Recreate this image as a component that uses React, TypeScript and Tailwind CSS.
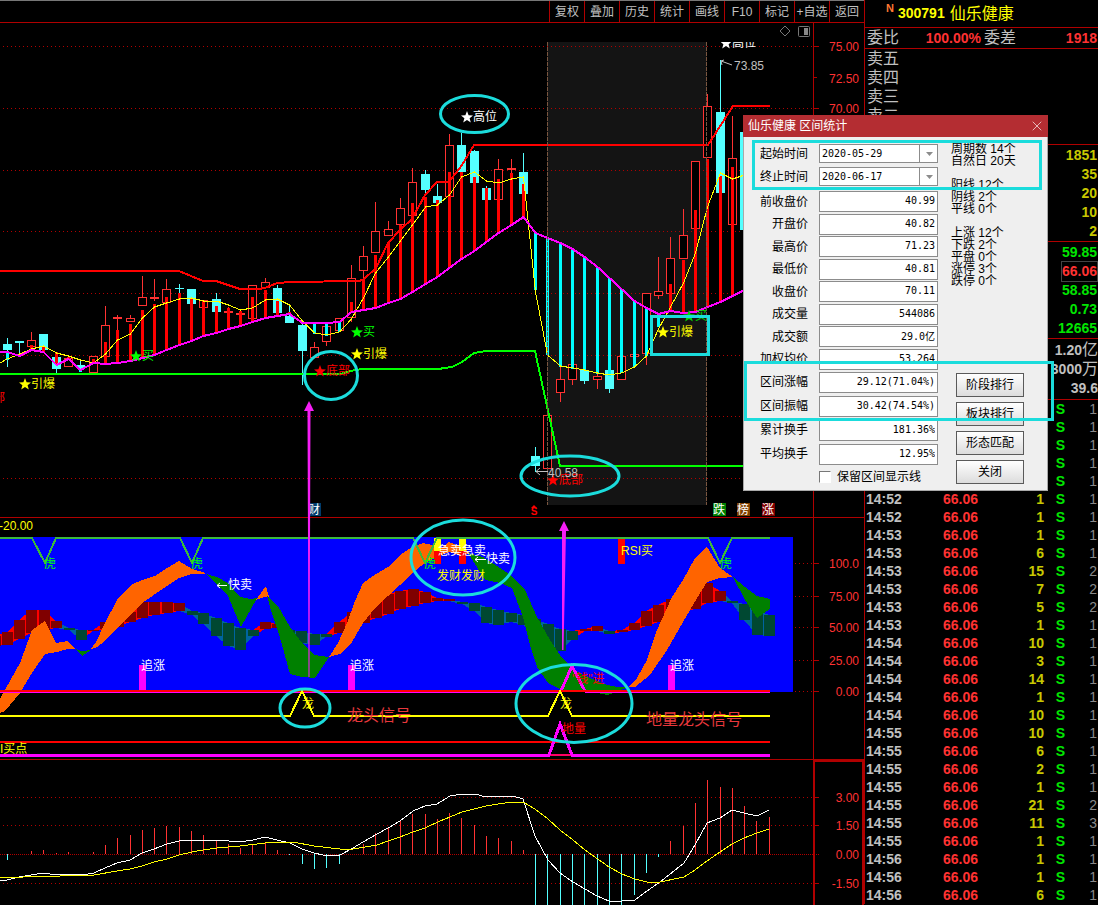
import React from 'react';
import { X } from 'lucide-react';

const GRID = '#b00000';
const RED = '#ff3232';
const CYAN = '#54ffff';
const MARK = '#1bdcdc';

// x of the nth bar
const bx = (i: number) => Math.round(6.6 + 12.293 * i) + 0.5;
const pts = (list: number[][]) => list.map((p) => p.join(',')).join(' ');
const byBar = (ys: number[]) => ys.map((y, i) => `${bx(i)},${y}`).join(' ');

// up, high, low, body top, body bottom
type Candle = [boolean, number, number, number, number];
const U = true;
const D = false;
const candles: Candle[] = [
  [D, 338, 367, 344, 350], [D, 341, 353, 341, 343], [U, 332, 347, 340, 347], [D, 334, 350, 334, 350],
  [D, 352, 373, 357, 369], [U, 356, 367, 358, 367], [D, 359, 372, 365, 368], [U, 356, 373, 356, 373],
  [U, 306, 357, 325, 357], [U, 315, 330, 317, 319], [U, 315, 322, 318, 322], [U, 276, 306, 297, 306],
  [U, 279, 301, 297, 299], [U, 279, 303, 289, 303], [D, 284, 293, 288, 289], [D, 289, 304, 289, 304],
  [U, 300, 308, 300, 308], [D, 293, 312, 299, 312], [U, 307, 313, 311, 313], [U, 310, 315, 313, 315],
  [U, 285, 319, 285, 319], [U, 278, 288, 282, 288], [D, 285, 313, 288, 313], [D, 305, 323, 316, 323],
  [D, 320, 385, 325, 351], [U, 342, 358, 347, 358], [U, 326, 346, 326, 342], [U, 318, 331, 318, 331],
  [U, 265, 322, 278, 318], [U, 246, 280, 256, 271], [U, 202, 253, 231, 253], [U, 221, 236, 229, 236],
  [U, 198, 225, 208, 225], [U, 168, 216, 182, 216], [D, 170, 195, 174, 190], [D, 184, 203, 196, 203],
  [U, 134, 197, 145, 197], [D, 133, 172, 145, 172], [D, 150, 183, 151, 183], [D, 186, 200, 188, 200],
  [U, 159, 200, 169, 200], [U, 159, 173, 168, 170], [D, 153, 194, 172, 194], [D, 447, 472, 456, 466],
  [U, 415, 469, 415, 469], [U, 367, 402, 379, 393], [U, 364, 385, 364, 380], [D, 370, 384, 370, 381],
  [U, 374, 389, 376, 380], [D, 370, 393, 370, 389], [U, 356, 380, 356, 380], [U, 352, 367, 354, 357],
  [U, 293, 365, 293, 354], [U, 257, 299, 291, 296], [U, 237, 294, 258, 294], [U, 209, 259, 235, 259],
  [U, 161, 229, 161, 229], [U, 94, 158, 106, 158], [D, 60, 193, 112, 193], [U, 116, 225, 158, 225],
  [D, 132, 230, 132, 230],
];

const trend = [
  352, 356, 350, 352, 365, 359, 370, 363, 364, 363, 361, 358, 355, 350, 345, 341, 336, 333, 329, 326,
  322, 318, 316, 314, 323, 323, 323, 322, 312, 310, 308, 303, 299, 292, 284, 277, 268, 259, 251, 242,
  233, 225, 217, 233, 238, 243, 249, 257, 267, 278, 289, 301, 308, 314, 311, 313, 312, 307, 302, 296, 290,
];

const fast = [
  359, 354, 349, 346, 353, 356, 360, 363, 354, 340, 334, 318, 307, 303, 299, 298, 301, 301, 305, 310,
  308, 300, 299, 305, 321, 333, 335, 332, 319, 298, 273, 257, 241, 225, 207, 205, 195, 177, 172, 181,
  183, 179, 177, 292, 355, 366, 368, 370, 373, 375, 373, 367, 356, 329, 307, 283, 253, 207, 173, 179, 175,
];

// start of the stripe that hangs between price and trend line
const stripes = [
  360, 357, 345, 347, 352, 357, 372, 359, 342, 330, 324, 310, 304, 297, 293, 299, 301, 306, 308, 311,
  297, 290, 301, 312, 324, 334, 336, 332, 302, 280, 255, 242, 225, 203, 197, 200, 172, 172, 177, 188,
  179, 173, 184, 290, 355, 367, 369, 370, 374, 376, 373, 367, 356, 327, 284, 260, 210, 159, 176, 167, 240,
];

// up, x, y, height
const blocks: [boolean, number, number, number][] = [
  [U, -10, 636, 10], [U, 2, 632, 13], [U, 14, 620, 19], [U, 26, 610, 23], [U, 39, 610, 20], [U, 51, 621, 7],
  [D, 64, 628, 2], [D, 76, 630, 10], [U, 88, 630, 1], [U, 100, 622, 7], [U, 113, 619, 8], [U, 125, 612, 10],
  [U, 137, 602, 16], [U, 149, 602, 13], [U, 162, 602, 11], [U, 174, 603, 8], [D, 187, 611, 4], [D, 198, 613, 11],
  [D, 211, 618, 18], [D, 223, 623, 23], [D, 235, 628, 22], [D, 248, 630, 6], [U, 260, 622, 7], [U, 272, 624, 4],
  [D, 284, 630, 5], [D, 296, 631, 12], [D, 309, 634, 11], [D, 321, 634, 3], [U, 334, 622, 11], [U, 347, 612, 18],
  [U, 359, 606, 17], [U, 371, 598, 20], [U, 383, 594, 20], [U, 395, 591, 18], [U, 408, 589, 17], [U, 420, 592, 11],
  [U, 432, 598, 3], [U, 444, 599, 2], [D, 457, 602, 2], [D, 469, 603, 8], [D, 481, 607, 16], [D, 493, 610, 15],
  [D, 506, 613, 9], [D, 518, 615, 10], [D, 530, 619, 12], [D, 543, 624, 23], [D, 555, 629, 22], [D, 567, 631, 9],
  [U, 580, 629, 2], [U, 592, 626, 5], [D, 604, 631, 3], [U, 617, 630, 2], [U, 629, 623, 7], [U, 641, 611, 15],
  [U, 653, 605, 17], [U, 666, 599, 17], [U, 678, 595, 17], [U, 690, 592, 17], [U, 702, 583, 20], [U, 715, 591, 10],
  [D, 727, 601, 2], [D, 739, 604, 16], [D, 752, 610, 25], [D, 764, 615, 21],
];

const waves: { fill: string; points: string }[] = [
  { fill: '#ff6400', points: '0,699 20,663 32,630 45,621 56,643 68,641 75,649 68,649 57,652 45,654 32,673 20,693 5,711 0,713' },
  { fill: '#008000', points: '75,649 82,651 91,650 82,656' },
  { fill: '#ff6400', points: '91,649 96,642 104,625 117,600 131,585 142,580 155,576 167,568 179,561 192,569 203,572 206,574 192,574 179,578 167,586 142,603 117,628 105,641 97,647' },
  { fill: '#008000', points: '206,574 217,577 228,583 240,597 251,599 257,598 241,627 228,596 217,585' },
  { fill: '#ff6400', points: '256,600 266,586 269,597 264,597' },
  { fill: '#008000', points: '267,595 270,599 278,606 290,627 302,643 314,655 329,657 315,678 302,677 290,674 279,634 270,607' },
  { fill: '#ff6400', points: '329,657 338,643 347,623 355,601 363,583 376,574 388,567 400,555 412,547 423,543 432,545 440,549 449,542 462,547 470,553 462,556 449,552 437,557 425,563 412,573 400,585 375,608 363,623 352,642 340,654' },
  { fill: '#008000', points: '468,553 483,557 500,568 512,576 525,590 537,617 550,640 562,658 572,668 583,675 607,685 617,687 628,687 617,692 607,695 593,692 562,690 548,683 537,667 530,645 523,617 512,588 500,583 485,580 480,572' },
  { fill: '#ff6400', points: '628,687 637,678 647,660 657,630 672,597 683,580 695,558 707,547 720,568 733,577 720,578 707,582 697,598 683,622 667,650 650,675 635,687' },
  { fill: '#008000', points: '733,577 745,587 757,596 770,599 770,609 757,618 745,600' },
];

const macdBars = [
  860, 854, 851, 850, 853, 852, 854, 852, 845, 838, 835, 830, 828, 826, 827, 831, 835, 840, 844, 848,
  845, 843, 850, 855, 864, 869, 868, 864, 854, 844, 833, 827, 821, 814, 814, 819, 813, 818, 825, 836,
  838, 841, 850, 905, 905, 905, 905, 905, 905, 905, 905, 895, 873, 857, 841, 826, 803, 780, 787, 788,
  806, 821, 817,
];

const dif = [
  [0, 881], [7, 880], [19, 877], [31, 875], [44, 873], [56, 875], [68, 874], [82, 875], [94, 873], [105, 868],
  [117, 863], [130, 860], [142, 853], [154, 849], [167, 844], [179, 841], [192, 840], [217, 840], [240, 842],
  [253, 840], [265, 837], [277, 840], [290, 843], [302, 849], [314, 853], [323, 855], [340, 855], [353, 848],
  [363, 842], [377, 834], [388, 828], [400, 821], [413, 811], [425, 806], [437, 804], [450, 796], [462, 794],
  [475, 794], [486, 797], [498, 796], [513, 796], [523, 799], [535, 836], [548, 860], [560, 873], [573, 882],
  [597, 896], [609, 901], [622, 901], [635, 900], [647, 891], [660, 882], [684, 863], [695, 845], [707, 823],
  [720, 818], [732, 810], [744, 813], [757, 816], [769, 810],
];

const dea = [
  [0, 877], [23, 877], [27, 876], [60, 876], [67, 875], [94, 875], [117, 871], [130, 869], [142, 866], [154, 862],
  [167, 859], [179, 855], [192, 852], [203, 850], [217, 848], [240, 846], [265, 843], [277, 842], [293, 842],
  [314, 846], [340, 849], [353, 849], [377, 845], [388, 841], [400, 837], [413, 832], [425, 828], [440, 821],
  [450, 817], [462, 812], [486, 806], [511, 802], [523, 802], [535, 809], [548, 819], [560, 830], [573, 840],
  [585, 850], [609, 867], [622, 874], [635, 879], [647, 882], [660, 882], [684, 877], [695, 870], [707, 861],
  [720, 852], [732, 844], [744, 838], [757, 833], [769, 829],
];

const upper = '0,271 179,271 203,281 216,281 240,289 258,289 265,288 277,283 291,282 358,281 363,280 376,268 388,243 400,230 412,219 425,195 437,182 449,182 462,165 474,145 708,145 733,106 770,106';
const lower = '0,374 340,374 355,370 363,369 438,369 452,367 462,362 474,353 486,351 535,351 560,466 770,466';

const toolbar = ['复权', '叠加', '历史', '统计', '画线', 'F10', '标记', '+自选', '返回'];

const bids = ['1851', '35', '20', '10', '2'];
const quotes = ['59.85', '66.06', '58.85', '0.73', '12665'];
const totals = [['1.20', '亿'], ['3000', '万'], ['39.6', '']];

const trades: [string, string, string, string][] = [
  ['', '', '', '1'], ['', '', '', '1'], ['', '', '', '1'], ['', '', '', '1'], ['', '', '', '1'],
  ['14:52', '66.06', '1', '1'], ['14:52', '66.06', '1', '1'], ['14:53', '66.06', '1', '1'],
  ['14:53', '66.06', '6', '1'], ['14:53', '66.06', '15', '2'], ['14:53', '66.06', '7', '2'],
  ['14:53', '66.06', '5', '2'], ['14:53', '66.06', '1', '1'], ['14:54', '66.06', '10', '1'],
  ['14:54', '66.06', '3', '1'], ['14:54', '66.06', '14', '1'], ['14:54', '66.06', '1', '1'],
  ['14:54', '66.06', '10', '1'], ['14:55', '66.06', '10', '1'], ['14:55', '66.06', '6', '1'],
  ['14:55', '66.06', '2', '1'], ['14:55', '66.06', '1', '1'], ['14:55', '66.06', '21', '2'],
  ['14:55', '66.06', '11', '3'], ['14:55', '66.06', '1', '1'], ['14:56', '66.06', '1', '1'],
  ['14:56', '66.06', '1', '1'], ['14:56', '66.06', '6', '1'],
];

const priceFields = [
  ['前收盘价', '40.99'], ['开盘价', '40.82'], ['最高价', '71.23'], ['最低价', '40.81'],
  ['收盘价', '70.11'], ['成交量', '544086'], ['成交额', '29.0亿'], ['加权均价', '53.264'],
];
const rangeFields = [
  ['区间涨幅', '29.12(71.04%)'], ['区间振幅', '30.42(74.54%)'],
  ['累计换手', '181.36%'], ['平均换手', '12.95%'],
];

function Label({ x, y, color, size = 12, children }: { x: number; y: number; color: string; size?: number; children: React.ReactNode }) {
  return (
    <text x={x} y={y} fill={color} fontSize={size} dominantBaseline="central">
      {children}
    </text>
  );
}

// five-pointed star followed by its caption
function StarLabel({ x, y, color, children }: { x: number; y: number; color: string; children: string }) {
  return (
    <g>
      <path
        d="M6 0 L7.6 4.3 L12 4.4 L8.6 7.2 L9.8 11.6 L6 9 L2.2 11.6 L3.4 7.2 L0 4.4 L4.4 4.3 Z"
        transform={`translate(${x} ${y - 6})`}
        fill={color}
      />
      <Label x={x + 12} y={y} color={color}>{children}</Label>
    </g>
  );
}

function Grid({ ys }: { ys: number[] }) {
  return (
    <g stroke={GRID} shapeRendering="crispEdges">
      {ys.map((y) => (
        <g key={y}>
          <line x1={3} x2={814} y1={y + 0.5} y2={y + 0.5} strokeDasharray="1 3" />
          <line x1={814} x2={819} y1={y + 0.5} y2={y + 0.5} />
        </g>
      ))}
    </g>
  );
}

function AxisText({ items }: { items: [number, string][] }) {
  return (
    <g fill={RED} fontSize={12} textAnchor="end">
      {items.map(([y, t]) => (
        <text key={y} x={859} y={y} dominantBaseline="central">{t}</text>
      ))}
    </g>
  );
}

function Badge({ x, fill, children }: { x: number; fill: string; children: string }) {
  return (
    <g>
      <rect x={x} y={503} width={13} height={13} fill={fill} />
      <Label x={x} y={510} color="#fff">{children}</Label>
    </g>
  );
}

function PriceChart() {
  return (
    <svg viewBox="0 23 864 495" className="block w-full" role="img" aria-label="K线">
      <rect x={547} y={42} width={160} height={463} fill="#141414" />
      <Grid ys={[46, 108, 170, 231, 293, 355, 416, 478]} />
      <line x1={814} x2={817} y1={77.5} y2={77.5} stroke={GRID} />
      <g shapeRendering="crispEdges">
        {candles.map(([up, high, low, top, bottom], i) => {
          const x = bx(i);
          const color = up ? RED : CYAN;
          return (
            <g key={i} stroke={color}>
              <line x1={x} x2={x} y1={high} y2={top} />
              <line x1={x} x2={x} y1={bottom} y2={low} />
              {up && bottom - top > 2 ? (
                <rect x={x - 4} y={top + 0.5} width={8} height={bottom - top - 1} fill="#000" />
              ) : (
                <rect x={x - 4.5} y={top} width={9} height={bottom - top} fill={color} stroke="none" />
              )}
            </g>
          );
        })}
        {stripes.map((y, i) => (
          <rect
            key={i}
            x={bx(i) - 1.5}
            width={3}
            y={Math.min(y, trend[i])}
            height={Math.abs(trend[i] - y)}
            fill={y < trend[i] ? '#ff0000' : '#00ffff'}
          />
        ))}
        <polyline points={byBar(fast)} fill="none" stroke="#ffff00" />
        <line x1={0} y1={363} x2={7} y2={359} stroke="#ffff00" />
        <polyline points={`0,352 ${byBar(trend)}`} fill="none" stroke="#ff00ff" strokeWidth={2} />
        <polyline points={upper} fill="none" stroke="#ff0000" strokeWidth={2} />
        <polyline points={lower} fill="none" stroke="#00ff00" strokeWidth={2} />
        <g stroke="#7a5640" strokeDasharray="4 1">
          <line x1={547.5} x2={547.5} y1={42} y2={505} />
          <line x1={706.5} x2={706.5} y1={42} y2={505} />
        </g>
        <line x1={813.5} x2={813.5} y1={23} y2={518} stroke={GRID} />
        <line x1={0} x2={864} y1={517.5} y2={517.5} stroke={GRID} />
      </g>

      <path d="M785 26 L790 31 L785 36 L780 31 Z" fill="none" stroke="#777" />
      <rect x={798.5} y={26.5} width={11} height={10} rx={1} fill="none" stroke="#777" />
      <rect x={804} y={28} width={4} height={7} fill="#888" />

      <StarLabel x={130} y={356} color="#00ff00">买</StarLabel>
      <StarLabel x={19} y={384} color="#ffff00">引爆</StarLabel>
      <Label x={-7} y={398} color="#ff0000">部</Label>
      <StarLabel x={351} y={332} color="#00ff00">买</StarLabel>
      <StarLabel x={351} y={354} color="#ffff00">引爆</StarLabel>
      <StarLabel x={314} y={371} color="#ff0000">底部</StarLabel>
      <StarLabel x={461} y={117} color="#ffffff">高位</StarLabel>
      <StarLabel x={657} y={332} color="#ffff00">引爆</StarLabel>
      <StarLabel x={683} y={316} color="#00dc00">买</StarLabel>
      <StarLabel x={547} y={480} color="#ff0000">底部</StarLabel>
      <svg x={700} y={42} width={80} height={20} viewBox="700 42 80 20">
        <StarLabel x={720} y={43} color="#ffffff">高位</StarLabel>
      </svg>
      <path d="M732 65 L721 61 M724 60 L721 61 L722 65" fill="none" stroke="#c0c0c0" />
      <Label x={734} y={66} color="#c0c0c0">73.85</Label>
      <path d="M548 471.5 L536 471.5 M540 468 L536 471.5 L540 475" fill="none" stroke="#c0c0c0" />
      <Label x={548} y={473} color="#c0c0c0">40.58</Label>

      <Badge x={308} fill="#003c6c">财</Badge>
      <Badge x={713} fill="#008000">跌</Badge>
      <Badge x={737} fill="#804000">榜</Badge>
      <Badge x={762} fill="#800000">涨</Badge>
      <path d="M531 508 L534 505 L537 508 Z" fill="#ff0000" />
      <text x={534} y={515} fill="#ff0000" fontSize={10} fontWeight="bold" textAnchor="middle">S</text>

      <AxisText items={[[47, '75.00'], [79, '72.50'], [109, '70.00']]} />
    </svg>
  );
}

function SignalChart() {
  return (
    <svg viewBox="0 518 864 242" className="block w-full" role="img" aria-label="买卖信号">
      <Grid ys={[563, 596, 627, 660, 691]} />
      <rect x={0} y={537} width={793} height={155} fill="#0000ff" />
      <g shapeRendering="crispEdges">
        {blocks.slice(1).map(([up, x, y, h], i) => {
          const [, px, py, ph] = blocks[i];
          return (
            <polygon
              key={x}
              points={pts([[px + 5, py], [x + 5, y], [x + 5, y + h], [px + 5, py + ph]])}
              fill={up ? '#ff0000' : '#0064a0'}
            />
          );
        })}
        {blocks.map(([up, x, y, h]) => (
          <rect key={x} x={x} y={y} width={11} height={h} fill={up ? '#800000' : '#004832'} />
        ))}
        {waves.map((w) => (
          <polygon key={w.points} points={w.points} fill={w.fill} />
        ))}

        <g fill="#ff00ff">
          <rect x={139} y={665} width={7} height={27} />
          <rect x={348} y={665} width={7} height={27} />
          <rect x={668} y={665} width={7} height={27} />
        </g>
        <rect x={434} y={538} width={7} height={13} fill="#ffff00" />
        <rect x={434} y={551} width={7} height={13} fill="#ff0000" />
        <rect x={459} y={538} width={7} height={13} fill="#ffff00" />
        <rect x={459} y={551} width={7} height={13} fill="#ff0000" />
        <rect x={618} y={539} width={7} height={25} fill="#ff0000" />

        <polyline
          points="0,538 32,538 45,563 56,538 180,538 192,563 203,538 413,538 425,563 437,538 708,538 720,563 732,538 770,538"
          fill="none"
          stroke="#3cb83c"
          strokeWidth={2}
        />
        <polyline points="0,692 561,692" fill="none" stroke="#ff00ff" strokeWidth={2} />
        <polyline points="585,692 770,692" fill="none" stroke="#ff00ff" strokeWidth={2} />
        <polyline points="561,691 572,666 585,691" fill="none" stroke="#ff00ff" strokeWidth={3} />
        <rect x={0} y={690} width={770} height={2} fill="#ff0000" />
        <polyline points="0,716 290,716 302,691 314,716 548,716 560,691 572,716 770,716" fill="none" stroke="#ffff00" strokeWidth={2} />
        <rect x={0} y={741} width={770} height={2} fill="#ff0000" />
        <rect x={549} y={754} width={23} height={2} fill="#ff0064" />
        <polyline points="0,755 549,755 560,724 572,755 770,755" fill="none" stroke="#ff00ff" strokeWidth={3} />
        <line x1={813.5} x2={813.5} y1={518} y2={760} stroke={GRID} />
        <line x1={0} x2={864} y1={759.5} y2={759.5} stroke={GRID} />
      </g>

      <Label x={-1} y={526} color="#ffff00">-20.00</Label>
      <Label x={44} y={564} color="#00ff00">虎</Label>
      <Label x={191} y={564} color="#00ff00">虎</Label>
      <Label x={424} y={564} color="#00ff00">虎</Label>
      <Label x={720} y={564} color="#00ff00">虎</Label>
      <path d="M227 585.5 L217 585.5 M220 583 L217 585.5 L220 588" fill="none" stroke="#fff" />
      <Label x={228} y={585} color="#fff">快卖</Label>
      <path d="M486 559.5 L475 559.5 M478 557 L475 559.5 L478 562" fill="none" stroke="#fff" />
      <Label x={486} y={559} color="#fff">快卖</Label>
      <Label x={438} y={551} color="#fff">急卖</Label>
      <Label x={462} y={551} color="#fff">急卖</Label>
      <Label x={437} y={576} color="#ffff00">发财发财</Label>
      <Label x={621} y={551} color="#ffff00">RSI买</Label>
      <Label x={141} y={666} color="#fff">追涨</Label>
      <Label x={350} y={666} color="#fff">追涨</Label>
      <Label x={670} y={666} color="#fff">追涨</Label>
      <Label x={302} y={704} color="#ffff00">龙</Label>
      <Label x={560} y={704} color="#ffff00">龙</Label>
      <Label x={572} y={679} color="#ff0000">"钱"进</Label>
      <Label x={562} y={729} color="#ff0000">地量</Label>
      <Label x={0} y={749} color="#ffff00">I买点</Label>
      <Label x={347} y={715} color="#e8383c" size={16}>龙头信号</Label>
      <Label x={646} y={719} color="#e8383c" size={16}>地量龙头信号</Label>

      <AxisText items={[[564, '100.0'], [597, '75.00'], [628, '50.00'], [661, '25.00'], [692, '0.00']]} />
    </svg>
  );
}

function MacdChart() {
  return (
    <svg viewBox="0 760 864 145" className="block w-full" role="img" aria-label="MACD">
      <Grid ys={[797, 825, 883]} />
      <g shapeRendering="crispEdges" fill="none">
        <line x1={0} x2={819} y1={854.5} y2={854.5} stroke={GRID} strokeDasharray="1 1" />
        {macdBars.map((y, i) => (
          <line key={i} x1={bx(i)} x2={bx(i)} y1={854} y2={y} stroke={y > 854 ? CYAN : RED} />
        ))}
        <polyline points={pts(dif)} stroke="#ffffff" />
        <polyline points={pts(dea)} stroke="#ffff00" />
        <path d="M814 906 V761 H863 V906" stroke={GRID} strokeWidth={2} />
      </g>
      <AxisText items={[[798, '3.00'], [826, '1.50'], [855, '0.00'], [884, '-1.50']]} />
    </svg>
  );
}

// hand-drawn marks that run across the three panes
function Marks() {
  return (
    <svg viewBox="0 23 864 882" className="pointer-events-none absolute inset-0 w-full" aria-hidden="true">
      <g fill="none" stroke={MARK} strokeWidth={3}>
        <ellipse cx={474.5} cy={114} rx={34} ry={18.5} />
        <ellipse cx={331} cy={375.5} rx={26.5} ry={24} />
        <ellipse cx={570} cy={476} rx={49} ry={20} />
        <ellipse cx={463} cy={557.5} rx={52} ry={37.5} />
        <ellipse cx={305} cy={708} rx={25} ry={19} />
        <ellipse cx={574} cy={703.5} rx={58} ry={39} />
        <rect x={651.5} y={316.5} width={57} height={38} />
      </g>
      <g fill="#f51ef5">
        <path d="M309 401 L314 411 H310.5 L309.5 677 H308.5 L307.5 411 H304 Z" />
        <path d="M564 521 L569 531 H566 L563.5 650 H562 L562 531 H559 Z" />
      </g>
    </svg>
  );
}

function QuotePanel() {
  return (
    <aside className="w-[234px] shrink-0 border-l border-[#b00000] text-[14px] font-bold text-[#c0c0c0]">
      <h1 className="flex h-[28px] items-center border-b border-[#b00000] pl-[21px] text-[#ffff00]">
        <sup className="pr-[4px] text-[11px] text-[#ff7832]">N</sup>
        300791
        <span className="pl-[5px] text-[16px] font-normal">仙乐健康</span>
      </h1>
      <div className="flex h-[21px] items-center border-b border-[#b00000] pl-[2px] text-[#ff3232]">
        <span className="flex-1 text-[16px] font-normal text-[#c0c0c0]">委比</span>
        <span>100.00%</span>
        <span className="pl-[3px] text-[16px] font-normal text-[#c0c0c0]">委差</span>
        <span className="w-[82px] pr-px text-right">1918</span>
      </div>
      <ul className="border-b border-[#b00000] pl-[2px] text-[16px] font-normal leading-[19px]">
        <li>卖五</li>
        <li>卖四</li>
        <li>卖三</li>
        <li>卖二</li>
        <li>卖一</li>
      </ul>
      <ul className="border-b border-[#b00000] pt-px pr-px text-right leading-[19px] text-[#c8c800]">
        {bids.map((v) => <li key={v}>{v}</li>)}
      </ul>
      <ul className="flex flex-col items-end border-b border-[#b00000] pt-px pr-px leading-[19px] text-[#00e600]">
        {quotes.map((v) => (
          <li key={v} className={v === '66.06' ? 'text-[#ff3232] outline outline-[#444]' : ''}>{v}</li>
        ))}
      </ul>
      <ul className="border-b border-[#b00000] pt-px pb-[2px] text-right leading-[19px]">
        {totals.map(([v, unit]) => (
          <li key={v} className="h-[19px]">
            {v}
            <span className="text-[16px] font-normal">{unit}</span>
          </li>
        ))}
      </ul>
      <table className="w-full table-fixed leading-[18px]">
        <tbody>
          {trades.map(([time, price, vol, n], i) => (
            <tr key={i} className="h-[18px]">
              <td className="w-[50px] p-0 pl-px">{time}</td>
              <td className="w-[63px] p-0 text-right text-[#ff3232]">{price}</td>
              <td className="w-[66px] p-0 text-right text-[#c8c800]">{vol}</td>
              <td className="w-[21px] p-0 text-right text-[#00e600]">S</td>
              <td className="p-0 pr-px text-right font-normal text-[#888]">{n}</td>
            </tr>
          ))}
        </tbody>
      </table>
    </aside>
  );
}

function Field({ label, value, tall }: { label: string; value: string; tall?: boolean }) {
  return (
    <label className={`flex items-center justify-end gap-[11px] ${tall ? 'h-[24px]' : 'h-[23px] even:h-[22px]'}`}>
      {label}
      <input
        readOnly
        defaultValue={value}
        className="h-[21px] w-[119px] border border-[#8c8c8c] bg-white pr-[2px] pb-[2px] text-right font-['DejaVu_Sans_Mono','Noto_Sans_CJK_SC',monospace] text-[10px] outline-none"
      />
    </label>
  );
}

function DateField({ label, value }: { label: string; value: string }) {
  return (
    <label className="flex h-[23px] items-center justify-end gap-[11px]">
      {label}
      <span className="relative">
        <select className="block h-[19px] w-[119px] appearance-none border border-[#8c8c8c] bg-white pl-[2px] font-['DejaVu_Sans_Mono',monospace] text-[10px] outline-none">
          <option>{value}</option>
        </select>
        <span className="pointer-events-none absolute inset-y-0 right-0 flex w-[19px] items-center justify-center border-l border-[#8c8c8c]">
          <svg viewBox="0 0 7 4" className="h-[4px] w-[7px]" aria-hidden="true">
            <path d="M0 0 H7 L3.5 4 Z" fill="#8c8c8c" />
          </svg>
        </span>
      </span>
    </label>
  );
}

function RangeDialog() {
  return (
    <div
      role="dialog"
      aria-label="区间统计"
      className="absolute top-[115px] right-[50px] w-[305px] border border-[#a9a9a9] bg-[#efefef] text-[12px] text-black"
    >
      <div className="-mx-px -mt-px flex h-[22px] items-center justify-between bg-[#b42d32] pr-[3px] pl-[5px] text-white">
        <h2>仙乐健康 区间统计</h2>
        <button type="button" aria-label="关闭窗口">
          <X size={16} strokeWidth={1} />
        </button>
      </div>
      <div className="flex h-[353px]">
        <form className="w-[194px] pt-[5px]">
          <DateField label="起始时间" value="2020-05-29" />
          <DateField label="终止时间" value="2020-06-17" />
          <div className="pt-[2px]">
            {priceFields.map(([label, value]) => <Field key={label} label={label} value={value} />)}
          </div>
          {rangeFields.map(([label, value]) => <Field key={label} label={label} value={value} tall />)}
          <label className="flex h-[21px] items-center gap-[6px] pl-[75px] whitespace-nowrap">
            <input type="checkbox" className="size-[12px] appearance-none border border-white border-t-[#777] border-l-[#777] bg-white" />
            保留区间显示线
          </label>
        </form>
        <div className="flex flex-1 flex-col justify-between pb-[6px] pl-[13px]">
          <pre className="pt-[6px] font-['Liberation_Sans','Noto_Sans_CJK_SC',sans-serif] leading-[12px]">
            {'周期数 14个\n自然日 20天\n\n阳线 12个\n阴线 2个\n平线 0个\n\n上涨 12个\n下跌 2个\n平盘 0个\n涨停 3个\n跌停 0个'}
          </pre>
          <div className="flex flex-col gap-[5px] pl-[5px]">
            {['阶段排行', '板块排行', '形态匹配', '关闭'].map((t) => (
              <button
                key={t}
                type="button"
                className="h-[24px] w-[68px] border border-[#5a5a5a] bg-linear-to-b from-white to-[#dcdcdc]"
              >
                {t}
              </button>
            ))}
          </div>
        </div>
      </div>
      <div className="pointer-events-none absolute top-[24px] right-[5px] left-[8px] h-[50px] border-3 border-[#1bdcdc]" />
      <div className="pointer-events-none absolute top-[245px] -right-[7px] left-0 h-[60px] border-3 border-[#1bdcdc]" />
    </div>
  );
}

export default function App() {
  return (
    <div className="relative flex min-h-screen items-start overflow-hidden bg-black font-['Liberation_Sans','Noto_Sans_CJK_SC',sans-serif]">
      <main className="min-w-0 flex-1">
        <nav className="flex h-[23px] justify-end border-t border-b border-t-[#777] border-b-[#b00000] text-[12px] text-[#c0c0c0]">
          {toolbar.map((t) => (
            <button key={t} type="button" className="w-[35px] border-l border-[#b00000] whitespace-nowrap">
              {t}
            </button>
          ))}
        </nav>
        <div className="relative">
          <PriceChart />
          <SignalChart />
          <MacdChart />
          <Marks />
        </div>
      </main>
      <QuotePanel />
      <RangeDialog />
    </div>
  );
}
